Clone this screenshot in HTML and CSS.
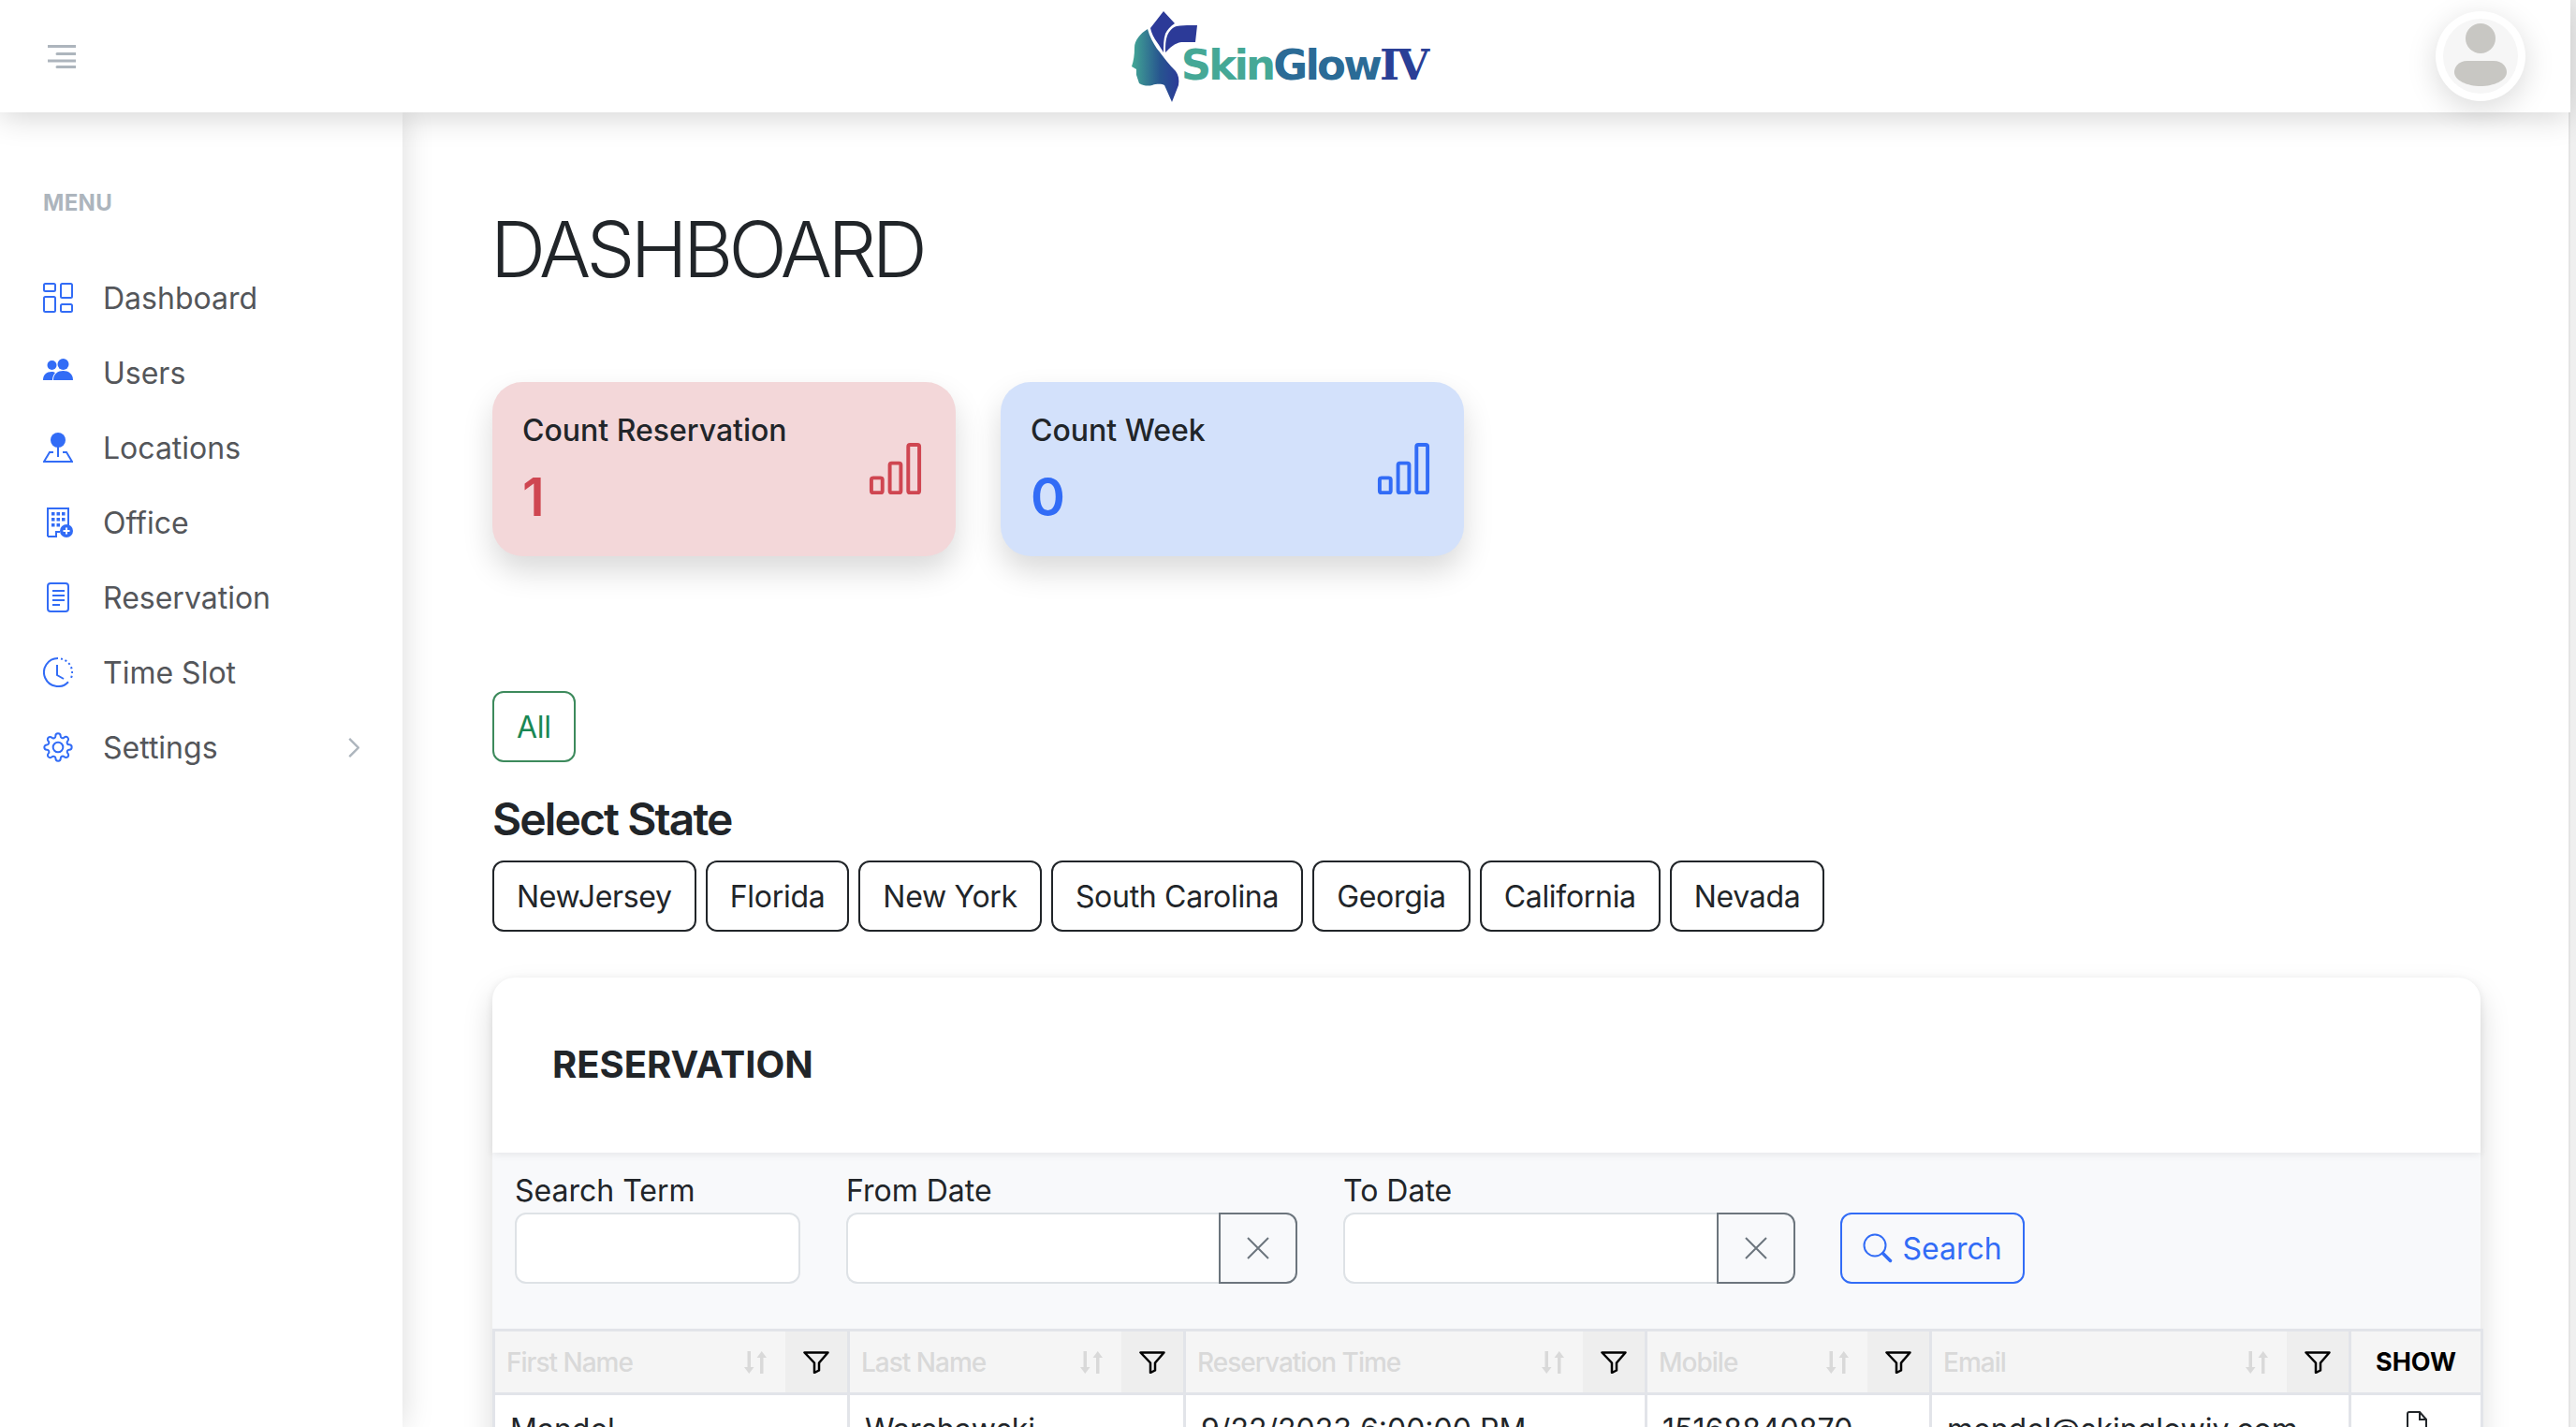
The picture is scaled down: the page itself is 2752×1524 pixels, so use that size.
FILE: index.html
```html
<!DOCTYPE html>
<html lang="en">
<head>
  <meta charset="UTF-8">
  <meta name="viewport" content="width=device-width, initial-scale=1.0">
  <title>SkinGlowIV Dashboard</title>
  <link rel="stylesheet" href="styles.css">
</head>
<body>
  <svg class="icon-defs" width="0" height="0">
    <defs>
      <symbol id="bars" viewBox="0 0 16 16">
        <path d="M4 11H2v3h2v-3zm5-4H7v7h2V7zm5-5v12h-2V2h2zm-2-1a1 1 0 0 0-1 1v12a1 1 0 0 0 1 1h2a1 1 0 0 0 1-1V2a1 1 0 0 0-1-1h-2zM6 7a1 1 0 0 1 1-1h2a1 1 0 0 1 1 1v7a1 1 0 0 1-1 1H7a1 1 0 0 1-1-1V7zm-5 4a1 1 0 0 1 1-1h2a1 1 0 0 1 1 1v3a1 1 0 0 1-1 1H2a1 1 0 0 1-1-1v-3z"/>
      </symbol>
      <symbol id="sort" viewBox="0 0 24 24">
        <path d="M3.500 0h3.500v17h3.500L5.250 24 0 17h3.500zM17 7h-3.500L18.750 0 24 7h-3.500v17H17z"/>
      </symbol>
      <symbol id="funnel" viewBox="0 0 28 24">
        <path d="M1.500 1.500h25L17 12.500v8l-5 2.500V12.500z" fill="none" stroke="#000" stroke-width="2.500" stroke-linejoin="round"/>
      </symbol>
      <symbol id="cross" viewBox="0 0 24 24">
        <path d="M1 1l22 22M23 1L1 23" fill="none" stroke="#6c757d" stroke-width="2"/>
      </symbol>
    </defs>
  </svg>

  <div class="page">
    <header class="topbar">
      <svg class="burger" viewBox="0 0 30 25" width="30" height="25">
        <path d="M0 1.500h30M10 9.500h20M0 17h30M10 23.500h20" stroke="#adb5bd" stroke-width="3" stroke-linecap="round"/>
      </svg>
      <div class="logo">
        <svg class="logo-mark" viewBox="0 0 70 97" width="70" height="97">
          <defs>
            <linearGradient id="faceFill" x1="0" x2="1" y1="0" y2="0">
              <stop offset="0" stop-color="#43a895"/>
              <stop offset="0.6" stop-color="#27558f"/>
              <stop offset="1" stop-color="#2b3a98"/>
            </linearGradient>
          </defs>
          <path d="M17 19C9 24 3 31 3 39c0 8-1 14-3 20l5 3 0 6 3 9c5 3 10 3 14 2 6-2 11-1 13 0l8 18 7-18c1-6 0-11-3-15C40 57 35 50 27 40c-4-6-8-13-10-21z" fill="url(#faceFill)"/>
          <path d="M34 0L20 18c1 5 4 11 7 15 3 4 5 8 7 11 0-8 0-14 2-20 2-4 5-8 10-11z" fill="#2c3a98"/>
          <path d="M36 44c0-7 0-13 2-18 2-5 6-9 10-10 7-1 15-1 22-1l-2 18H53c-7 1-12 6-17 11z" fill="#2c3a98"/>
        </svg>
        <div class="logo-word"><span class="logo-a">Skin</span><span class="logo-b">Glow</span><span class="logo-c">IV</span></div>
      </div>
      <div class="avatar">
        <svg viewBox="0 0 80 80" width="80" height="80">
          <circle cx="40" cy="40" r="40" fill="#f6f6f6"/>
          <circle cx="40" cy="21" r="16" fill="#c8c7c3"/>
          <path d="M26 45h28c10 0 14 7 14 12 0 9-14 15-28 15S12 66 12 57c0-5 4-12 14-12z" fill="#c8c7c3"/>
        </svg>
      </div>
    </header>

    <div class="body-row">
      <aside class="sidebar">
        <div class="menu-title">MENU</div>
        <nav class="menu">
          <a class="menu-item">
            <svg class="menu-icon" viewBox="0 0 32 32"><g fill="none" stroke="#326cf6" stroke-width="2"><rect x="1" y="1" width="12" height="8" rx="1.500"/><rect x="19" y="1" width="12" height="15" rx="1.500"/><rect x="1" y="15" width="12" height="16" rx="1.500"/><rect x="19" y="23" width="12" height="8" rx="1.500"/></g></svg>
            <span>Dashboard</span>
          </a>
          <a class="menu-item">
            <svg class="menu-icon" viewBox="0 0 32 32"><g fill="#326cf6"><circle cx="9.500" cy="8" r="5"/><circle cx="21.500" cy="7" r="6"/><path d="M0 24c0-6 4-9 9-9 2 0 3 .5 4 1-2 2-3 5-3 8z"/><path d="M11 24c0-7 5-10 10.500-10S32 17 32 24z"/></g></svg>
            <span>Users</span>
          </a>
          <a class="menu-item">
            <svg class="menu-icon" viewBox="0 0 32 32"><circle cx="16" cy="8" r="8" fill="#326cf6"/><path d="M16 14v12" stroke="#326cf6" stroke-width="2"/><path d="M11 21H7L1 31h30l-6-10h-4" fill="none" stroke="#326cf6" stroke-width="2"/></svg>
            <span>Locations</span>
          </a>
          <a class="menu-item">
            <svg class="menu-icon" viewBox="0 0 32 32"><path d="M5 31V1h22v18M5 31h9v-5h4" fill="none" stroke="#326cf6" stroke-width="2"/><g fill="#326cf6"><rect x="9" y="5" width="3.500" height="3.500"/><rect x="14.500" y="5" width="3.500" height="3.500"/><rect x="20" y="5" width="3.500" height="3.500"/><rect x="9" y="11" width="3.500" height="3.500"/><rect x="14.500" y="11" width="3.500" height="3.500"/><rect x="20" y="11" width="3.500" height="3.500"/><rect x="9" y="17" width="3.500" height="3.500"/><rect x="14.500" y="17" width="3.500" height="3.500"/><circle cx="25" cy="25" r="7"/></g><path d="M25 21.500v7M21.500 25h7" stroke="#fff" stroke-width="2"/></svg>
            <span>Office</span>
          </a>
          <a class="menu-item">
            <svg class="menu-icon" viewBox="0 0 32 32"><rect x="5" y="1" width="22" height="30" rx="3" fill="none" stroke="#326cf6" stroke-width="2"/><path d="M10 9h13M10 14h13M10 19h13M10 24h8" stroke="#326cf6" stroke-width="2"/></svg>
            <span>Reservation</span>
          </a>
          <a class="menu-item">
            <svg class="menu-icon" viewBox="0 0 32 32"><path d="M16 1A15 15 0 1 0 27 26.200" fill="none" stroke="#326cf6" stroke-width="2"/><path d="M19 1.500A15 15 0 0 1 29 24" fill="none" stroke="#326cf6" stroke-width="2" stroke-dasharray="2 2.800"/><path d="M15 8v11l7 4" fill="none" stroke="#326cf6" stroke-width="2"/></svg>
            <span>Time Slot</span>
          </a>
          <a class="menu-item">
            <svg class="menu-icon" viewBox="0 0 24 24"><g fill="none" stroke="#326cf6" stroke-width="1.500"><circle cx="12" cy="12" r="4"/><path d="M19.400 15a1.650 1.650 0 0 0 .33 1.820l.06.06a2 2 0 0 1 0 2.830 2 2 0 0 1-2.830 0l-.06-.06a1.650 1.650 0 0 0-1.820-.33 1.650 1.650 0 0 0-1 1.510V21a2 2 0 0 1-2 2 2 2 0 0 1-2-2v-.09A1.650 1.650 0 0 0 9 19.400a1.650 1.650 0 0 0-1.820.33l-.06.06a2 2 0 0 1-2.830 0 2 2 0 0 1 0-2.830l.06-.06a1.650 1.650 0 0 0 .33-1.820 1.650 1.650 0 0 0-1.510-1H3a2 2 0 0 1-2-2 2 2 0 0 1 2-2h.09A1.650 1.650 0 0 0 4.600 9a1.650 1.650 0 0 0-.33-1.820l-.06-.06a2 2 0 0 1 0-2.830 2 2 0 0 1 2.830 0l.06.06a1.650 1.650 0 0 0 1.820.33H9a1.650 1.650 0 0 0 1-1.510V3a2 2 0 0 1 2-2 2 2 0 0 1 2 2v.09a1.650 1.650 0 0 0 1 1.510 1.650 1.650 0 0 0 1.820-.33l.06-.06a2 2 0 0 1 2.830 0 2 2 0 0 1 0 2.830l-.06.06a1.650 1.650 0 0 0-.33 1.820V9a1.650 1.650 0 0 0 1.510 1H21a2 2 0 0 1 2 2 2 2 0 0 1-2 2h-.09a1.650 1.650 0 0 0-1.510 1z"/></g></svg>
            <span>Settings</span>
            <svg class="chevron" viewBox="0 0 12 22" width="12" height="21"><path d="M1 1l10 10L1 21" fill="none" stroke="#adb5bd" stroke-width="2.500"/></svg>
          </a>
        </nav>
      </aside>

      <main class="content">
        <h1 class="page-title">DASHBOARD</h1>

        <div class="stats">
          <div class="stat stat-red">
            <div>
              <div class="stat-label">Count Reservation</div>
              <div class="stat-num">1</div>
            </div>
            <svg class="stat-icon"><use href="#bars"/></svg>
          </div>
          <div class="stat stat-blue">
            <div>
              <div class="stat-label">Count Week</div>
              <div class="stat-num">0</div>
            </div>
            <svg class="stat-icon"><use href="#bars"/></svg>
          </div>
        </div>

        <button class="btn btn-all">All</button>
        <h2 class="state-title">Select State</h2>
        <div class="states">
          <button class="btn">NewJersey</button>
          <button class="btn">Florida</button>
          <button class="btn">New York</button>
          <button class="btn">South Carolina</button>
          <button class="btn">Georgia</button>
          <button class="btn">California</button>
          <button class="btn">Nevada</button>
        </div>

        <section class="panel">
          <div class="panel-head">RESERVATION</div>
          <div class="filters">
            <label class="field field-term">
              <span>Search Term</span>
              <input class="input" type="text">
            </label>
            <label class="field field-from">
              <span>From Date</span>
              <div class="date-group">
                <input class="input input-date" type="text">
                <button class="clear"><svg width="24" height="24"><use href="#cross"/></svg></button>
              </div>
            </label>
            <label class="field field-to">
              <span>To Date</span>
              <div class="date-group">
                <input class="input input-date" type="text">
                <button class="clear"><svg width="24" height="24"><use href="#cross"/></svg></button>
              </div>
            </label>
            <button class="btn-search">
              <svg viewBox="0 0 32 32" width="32" height="32"><circle cx="13" cy="13" r="11.500" fill="none" stroke="#326cf6" stroke-width="2"/><path d="M21.500 21.500l8 8" stroke="#326cf6" stroke-width="3.500" stroke-linecap="round"/></svg>
              Search
            </button>
          </div>

          <table class="grid">
            <colgroup>
              <col class="c-first"><col class="c-last"><col class="c-time"><col class="c-mobile"><col class="c-email"><col class="c-show">
            </colgroup>
            <thead>
              <tr>
                <th><div class="th-in"><span class="th-text">First Name</span><svg class="sort"><use href="#sort"/></svg><span class="th-filter"><svg class="funnel"><use href="#funnel"/></svg></span></div></th>
                <th><div class="th-in"><span class="th-text">Last Name</span><svg class="sort"><use href="#sort"/></svg><span class="th-filter"><svg class="funnel"><use href="#funnel"/></svg></span></div></th>
                <th><div class="th-in"><span class="th-text">Reservation Time</span><svg class="sort"><use href="#sort"/></svg><span class="th-filter"><svg class="funnel"><use href="#funnel"/></svg></span></div></th>
                <th><div class="th-in"><span class="th-text">Mobile</span><svg class="sort"><use href="#sort"/></svg><span class="th-filter"><svg class="funnel"><use href="#funnel"/></svg></span></div></th>
                <th><div class="th-in"><span class="th-text">Email</span><svg class="sort"><use href="#sort"/></svg><span class="th-filter"><svg class="funnel"><use href="#funnel"/></svg></span></div></th>
                <th class="th-show">SHOW</th>
              </tr>
            </thead>
            <tbody>
              <tr>
                <td>Mandel</td>
                <td>Warshawski</td>
                <td>9/22/2023 6:00:00 PM</td>
                <td>15168840870</td>
                <td>mendel@skinglowiv.com</td>
                <td class="td-show">
                  <svg viewBox="0 0 24 32" width="24" height="32"><path d="M2 30V3a2 2 0 0 1 2-2h11l7 8v21a2 2 0 0 1-2 2H4a2 2 0 0 1-2-2zM15 1v8h7" fill="none" stroke="#212529" stroke-width="2"/></svg>
                </td>
              </tr>
            </tbody>
          </table>
        </section>
      </main>
    </div>
    <div class="edge-shade"></div>
  </div>
</body>
</html>
```

FILE: styles.css
```css
* {
  margin: 0;
  padding: 0;
  box-sizing: border-box;
}
html, body {
  height: 1524px;
  overflow: hidden;
}
body {
  font-family: Inter, "Noto Sans", sans-serif;
  color: #212529;
  background-color: #fff;
}
.icon-defs {
  display: block;
  height: 0;
}
.page {
  position: relative;
  width: 2752px;
  height: 1524px;
  overflow: hidden;
  padding-right: 6px;
}
/* soft shade along the left edge of the window */
.edge-shade {
  position: absolute;
  top: 0;
  bottom: 0;
  left: 0;
  width: 44px;
  background: linear-gradient(to right, rgba(0, 0, 0, 0.1), rgba(0, 0, 0, 0));
  pointer-events: none;
}
.page::after {
  content: "";
  position: absolute;
  top: 0;
  bottom: 0;
  right: 0;
  width: 6px;
  background-color: #efefef;
  border-left: 2px solid #e4e4e4;
}

/* top bar */
.topbar {
  position: relative;
  z-index: 2;
  height: 120px;
  display: flex;
  align-items: center;
  justify-content: space-between;
  padding: 0 48px 0 51px;
  background-color: #fff;
  box-shadow: 0 4px 32px rgba(0, 0, 0, 0.18);
}
.logo {
  display: flex;
  align-items: flex-end;
  height: 97px;
  margin-left: 50px;
}
.logo-mark {
  display: block;
  flex: none;
}
.logo-word {
  font-family: "DejaVu Sans", sans-serif;
  font-size: 45px;
  font-weight: 700;
  line-height: 56px;
  margin: 0 0 11px -17px;
  letter-spacing: -2.8px;
}
.logo-a { color: #45a896; }
.logo-b { color: #2b6b96; }
.logo-c {
  color: #2a3f96;
  font-family: "DejaVu Serif", serif;
}
.avatar {
  width: 96px;
  height: 96px;
  padding: 8px;
  border-radius: 50%;
  background-color: #fff;
  box-shadow: 0 8px 32px rgba(0, 0, 0, 0.15);
}
.avatar svg {
  display: block;
}

/* sidebar */
.body-row {
  display: flex;
  height: 1404px;
}
.sidebar {
  position: relative;
  z-index: 1;
  flex: 0 0 430px;
  padding: 82px 46px 0;
  background-color: #fff;
  box-shadow: 0 0 32px rgba(0, 0, 0, 0.15);
}
.menu-title {
  font-size: 24px;
  line-height: 30px;
  font-weight: 700;
  letter-spacing: 0.3px;
  color: #adb5bd;
  margin-bottom: 46px;
}
.menu {
  display: flex;
  flex-direction: column;
}
.menu-item {
  display: flex;
  align-items: center;
  height: 80px;
  font-size: 32px;
  color: #54565a;
}
.menu-icon {
  width: 32px;
  height: 32px;
  flex: none;
  margin-right: 32px;
}
.chevron {
  margin-left: auto;
}

/* main */
.content {
  flex: 1;
  min-width: 0;
  padding: 99px 96px 0;
}
.page-title {
  font-size: 82px;
  line-height: 96px;
  font-weight: 300;
  letter-spacing: -4.6px;
  margin: 0 0 93px -2px;
}
.stats {
  display: flex;
  gap: 48px;
  margin-bottom: 144px;
}
.stat {
  width: 495px;
  height: 186px;
  padding: 32px;
  border-radius: 32px;
  display: flex;
  justify-content: space-between;
  box-shadow: 0 16px 32px rgba(0, 0, 0, 0.15);
}
.stat-red {
  background-color: #f3d7d9;
  color: #cf4651;
}
.stat-blue {
  background-color: #d3e1fb;
  color: #326cf6;
}
.stat-label {
  font-size: 32px;
  font-weight: 500;
  line-height: 40px;
  color: #212529;
  margin-bottom: 17px;
}
.stat-num {
  font-size: 56px;
  font-weight: 600;
  line-height: 68px;
}
.stat-icon {
  width: 63px;
  height: 63px;
  fill: currentColor;
  margin: 29px 1px 0 0;
}
.btn {
  height: 76px;
  padding: 0 24px;
  font-family: inherit;
  font-size: 32px;
  letter-spacing: -0.3px;
  color: #212529;
  background-color: #fff;
  border: 2px solid #212529;
  border-radius: 12px;
}
.btn-all {
  display: block;
  color: #198754;
  border-color: #3d8a5c;
}
.state-title {
  font-size: 48px;
  font-weight: 600;
  line-height: 58px;
  letter-spacing: -1.9px;
  margin: 32px 0 15px;
}
.states {
  display: flex;
  gap: 10px;
  margin-bottom: 49px;
}

/* reservation panel */
.panel {
  width: 2124px;
  border-radius: 24px 24px 0 0;
  background-color: #f8f9fb;
  box-shadow: 0 16px 32px rgba(0, 0, 0, 0.15);
}
.panel-head {
  height: 187px;
  padding: 69px 64px 0;
  font-size: 40px;
  font-weight: 700;
  line-height: 48px;
  background-color: #fff;
  border-radius: 24px 24px 0 0;
  box-shadow: 0 2px 8px rgba(0, 0, 0, 0.08);
  position: relative;
}
.filters {
  display: flex;
  align-items: flex-end;
  padding: 22px 24px 48px;
}
.field {
  display: flex;
  flex-direction: column;
  gap: 4px;
  font-size: 32px;
  line-height: 38px;
}
.field-term { width: 305px; margin-right: 49px; }
.field-from { width: 482px; margin-right: 49px; }
.field-to { width: 483px; margin-right: 48px; }
.input {
  display: block;
  width: 100%;
  height: 76px;
  background-color: #fff;
  border: 2px solid #dee2e6;
  border-radius: 12px;
  outline: none;
}
.date-group {
  display: flex;
}
.input-date {
  flex: 1;
  min-width: 0;
  border-right: none;
  border-radius: 12px 0 0 12px;
}
.clear {
  flex: 0 0 84px;
  height: 76px;
  display: flex;
  align-items: center;
  justify-content: center;
  background-color: transparent;
  border: 2px solid #6c757d;
  border-radius: 0 12px 12px 0;
}
.btn-search {
  width: 197px;
  height: 76px;
  display: flex;
  align-items: center;
  justify-content: center;
  gap: 10px;
  font-family: inherit;
  font-size: 32px;
  color: #326cf6;
  background-color: transparent;
  border: 2px solid #326cf6;
  border-radius: 12px;
}

/* table */
.grid {
  width: 2124px;
  table-layout: fixed;
  border-collapse: collapse;
  background-color: #fff;
}
.c-first { width: 379px; }
.c-last { width: 359px; }
.c-time { width: 493px; }
.c-mobile { width: 304px; }
.c-email { width: 448px; }
.c-show { width: 141px; }
.grid th, .grid td {
  border: 3px solid #e2e4e9;
}
.grid th {
  height: 68px;
  background-color: #f5f5f5;
  padding: 0;
}
.th-in {
  display: flex;
  align-items: center;
  height: 65px;
  padding-left: 12px;
}
.th-text {
  flex: 1;
  text-align: left;
  font-size: 28px;
  font-weight: 500;
  letter-spacing: -1px;
  color: #d9d9d9;
}
.sort {
  width: 24px;
  height: 24px;
  fill: #d9d9d9;
  margin-right: 20px;
}
.th-filter {
  flex: 0 0 66px;
  height: 65px;
  display: flex;
  align-items: center;
  justify-content: center;
  background-color: #eeeeee;
}
.funnel {
  width: 28px;
  height: 24px;
}
.th-show {
  font-size: 27px;
  font-weight: 700;
  color: #000;
}
.grid td {
  padding: 17px 14px 20px 16px;
  font-size: 32px;
  line-height: 40px;
  color: #212529;
  vertical-align: top;
}
.td-show {
  text-align: center;
}
```
